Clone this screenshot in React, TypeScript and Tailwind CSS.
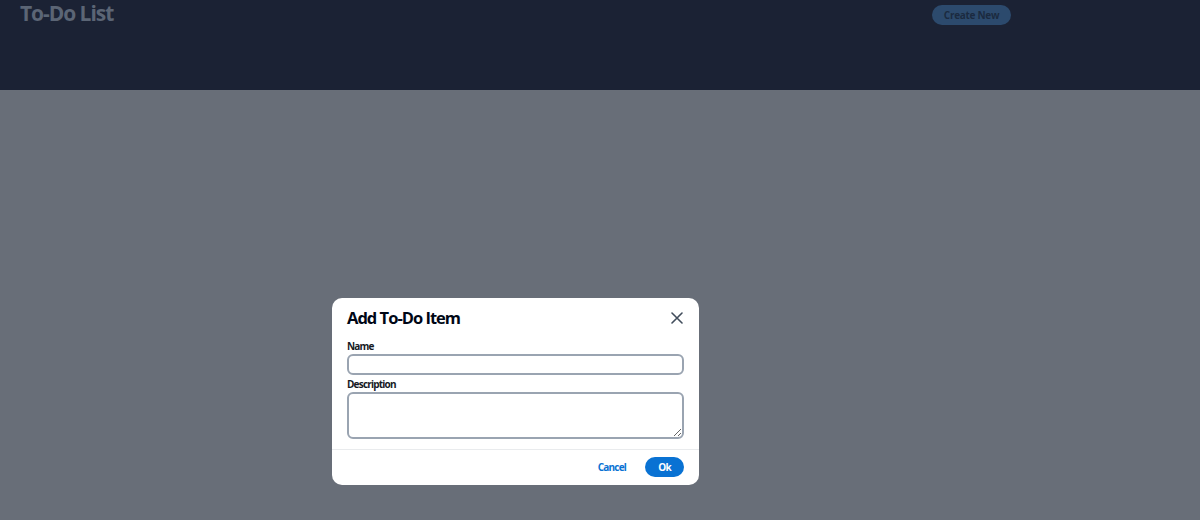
import React, { useState } from 'react';

const font = { fontFamily: '"Open Sans", "Noto Sans", sans-serif' };

const Header = () => (
  <header className="h-[90px] w-full bg-[#1b2234]">
    <div className="flex w-[1031px] items-start justify-between px-5">
      <h1 className="text-[21px] font-bold leading-[26px] tracking-[-0.05em] text-[#5b6575]">To-Do List</h1>
      <button className="mt-[5px] h-5 w-[79px] rounded-full bg-[#2c4a6d] text-[10px] font-bold leading-5 tracking-[-0.03em] text-[#1b2a40]">
        Create New
      </button>
    </div>
  </header>
);

const AddItemModal = ({ onClose }: { onClose: () => void }) => {
  const [name, setName] = useState('');
  const [description, setDescription] = useState('');

  return (
    <div className="absolute inset-0 top-[90px]">
      <div className="flex w-[1031px] justify-center pt-[208px]">
        <div className="flex w-[367px] flex-col rounded-[10px] bg-white tracking-[-0.05em]">
          <div className="flex items-center justify-between px-[15px] pt-[8px]">
            <h2 className="text-[16.5px] font-bold leading-[24px] tracking-[-0.06em] text-[#000716]">Add To-Do Item</h2>
            <button onClick={onClose} className="mr-[-3px] flex h-5 w-5 items-center justify-center text-[#414d5c]">
              <svg width="12" height="12" viewBox="0 0 12 12" fill="none">
                <path d="M1 1l10 10M11 1L1 11" stroke="currentColor" strokeWidth="1.6" strokeLinecap="round" />
              </svg>
            </button>
          </div>
          <div className="flex flex-col px-[15px] pt-[9px]">
            <label className="text-[10px] font-bold leading-[14px] text-[#16191f]">Name</label>
            <input
              value={name}
              onChange={(e) => setName(e.target.value)}
              className="mt-[1px] h-[21px] rounded-[6px] border-2 border-[#9aa4b1] px-2 text-[10px] outline-none"
            />
            <label className="mt-[2px] text-[10px] font-bold leading-[14px] text-[#16191f]">Description</label>
            <textarea
              value={description}
              onChange={(e) => setDescription(e.target.value)}
              className="mt-[1px] h-[47px] rounded-[6px] border-2 border-[#9aa4b1] px-2 text-[10px] outline-none"
            />
          </div>
          <div className="mt-[10px] border-t border-[#e9ebed]" />
          <div className="flex items-center justify-end gap-[19px] px-[15px] pb-[8px] pt-[7px]">
            <button onClick={onClose} className="text-[10px] font-bold leading-5 text-[#0972d3]">
              Cancel
            </button>
            <button onClick={onClose} className="h-5 w-[39px] rounded-full bg-[#0972d3] text-[10px] font-bold leading-5 text-white">
              Ok
            </button>
          </div>
        </div>
      </div>
    </div>
  );
};

export default function App() {
  const [open, setOpen] = useState(true);

  return (
    <div className="relative h-[520px] w-full overflow-hidden bg-[#686e78]" style={font}>
      <Header />
      {open && <AddItemModal onClose={() => setOpen(false)} />}
    </div>
  );
}
